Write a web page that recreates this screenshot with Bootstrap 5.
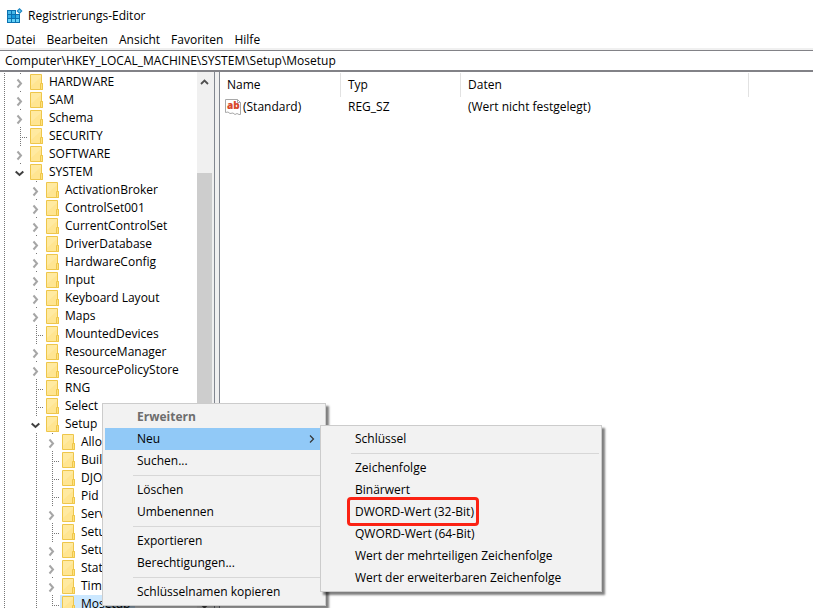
<!DOCTYPE html>
<html lang="de">
<head>
<meta charset="utf-8">
<meta name="viewport" content="width=device-width, initial-scale=1">
<title>Registrierungs-Editor</title>
<link href="https://cdn.jsdelivr.net/npm/bootstrap@5.3.0/dist/css/bootstrap.min.css" rel="stylesheet">
<style>
  body { font: 12px/18px "Open Sans", "Noto Sans", sans-serif; color: #000; background: #fff; }
  button { font: inherit; color: inherit; background: none; border: 0; padding: 0; text-align: left; }
  .title-bar { height: 30px; padding: 1px 7px 0; gap: 5px; }
  .menu-bar { height: 20px; padding: 0 6px; gap: 11px; border-bottom: 2px solid #f0f0f0; }
  .menu-bar button { line-height: 19px; }
  .address { height: 22px; padding: 0 5px; border: 0; border-top: 1px solid #828287; border-bottom: 2px solid #828287; border-radius: 0; font: inherit; color: #000; outline: 0; }
  .tree-pane { flex: 0 0 214px; }
  .tree { padding-top: 1px; }
  .tree li { display: flex; align-items: center; height: 18px; white-space: nowrap; }
  .tree a { color: #000; text-decoration: none; padding: 0 3px; }
  .folder { width: 14px; height: 16px; flex: none; margin-right: 2px; }
  .gap, .line, .stub, .twist { flex: none; width: 16px; height: 18px; }
  .edge { width: 15px; }
  .stub, .twist { width: 15px; }
  .line, .stub { background: repeating-linear-gradient(#777 0 1px, transparent 1px 2px) 5px 0 / 1px 100% no-repeat; }
  .edge { background-position-x: 4px; }
  .stub { background: repeating-linear-gradient(#777 0 1px, transparent 1px 2px) 5px 0 / 1px 100% no-repeat,
          repeating-linear-gradient(90deg, #777 0 1px, transparent 1px 2px) 7px 10px / 6px 1px no-repeat; }
  .stub.last { background-size: 1px 11px, 6px 1px; }
  .twist { background: linear-gradient(#777, #777) 5px 0 / 1px 1px no-repeat; }
  .twist svg { display: block; width: 10px; height: 18px; }
  .picked { background: #cce8ff; height: 18px; display: flex; align-items: center; padding-right: 2px; margin-left: -2px; padding-left: 2px; }
  .track { width: 17px; background: #f0f0f0; padding: 0 2px 0 0; }
  .arrow { height: 18px; width: 17px; line-height: 0; }
  .thumb { width: 15px; margin-top: 83px; background: #cdcdcd; }
  .splitter { flex: 0 0 6px; background: #f0f0f0; border-left: 1px solid #828790; border-right: 1px solid #828790; }
  .values { table-layout: fixed; }
  .values th { font-weight: 400; height: 25px; padding: 1px 7px 0; background: linear-gradient(#e2e2e2, #e2e2e2) 100% 1px / 1px 100% no-repeat; }
  .values th:last-child { background: none; }
  .values td { height: 20px; padding: 0 7px; white-space: nowrap; }
  .values td:first-child { padding: 0 5px; }
  .values .c-name { width: 121px; }
  .values .c-type { width: 120px; }
  .values .c-data { width: 288px; }
  .popup { position: absolute; z-index: 5; background: #f2f2f2; border: 1px solid #ccc; padding: 2px; box-shadow: 3px 3px 2px rgba(0,0,0,.5); }
  .popup ul { margin: 0; padding: 0; list-style: none; }
  .popup button { display: flex; align-items: center; width: 100%; height: 22px; padding: 0 8px 0 32px; white-space: nowrap; }
  .popup .active-item { background: #91c9f7; }
  .popup .rule { height: 1px; margin: 3px 0 3px 28px; background: #d7d7d7; }
  .ctx { left: 102px; top: 403px; width: 224px; }
  .sub { left: 215px; top: -3px; width: 282px; }
  .heading { font-weight: 700; color: #6d6d6d; }
  .ring { position: absolute; inset: -4px auto -3px 24px; width: 132px; border: 3px solid #fb2213; border-radius: 4px; pointer-events: none; }
</style>
</head>
<body class="vh-100 d-flex flex-column overflow-hidden position-relative">
<svg class="d-none">
  <symbol id="folder" viewBox="0 0 14 16"><path d="M.5.5h11v9h1v6H.5z" fill="#ffe591" stroke="#eec64a"/><path d="M1 1h10v2L1 12z" fill="#ffecab" opacity=".6"/><path d="M10.500 9.500h2v6h-2z" fill="#ffe27f" stroke="#eec64a"/></symbol>
  <symbol id="closed" viewBox="0 0 10 18"><path d="M2.500 6.500 6 10.500 2.500 14.500" fill="none" stroke="#a6a6a6" stroke-width="2"/></symbol>
  <symbol id="open" viewBox="0 0 10 18"><path d="M.700 8.500 4.500 12l3.800-3.500" fill="none" stroke="#404040" stroke-width="2"/></symbol>
</svg>

<header class="title-bar d-flex align-items-center flex-shrink-0">
  <svg width="16" height="16" viewBox="0 0 16 16" class="flex-shrink-0">
    <path d="M0 2h9v4h4v9H0z" fill="#0b71b0"/>
    <path d="M1 3h3v3H1zM5 3h3v3H5z" fill="#49b9e8"/>
    <path d="M1 7h3v3H1zM5 7h3v3H5zM9 7h3v3H9z" fill="#3aaee4"/>
    <path d="M5 7h3v3H5z" fill="#1599dc"/>
    <path d="M1 11h3v3H1zM5 11h3v3H5zM9 11h3v3H9z" fill="#63d0f6"/>
    <path d="m12.500 0 3 3-3 3-3-3z" fill="#1582c0"/><path d="m12.500 1.500 1.500 1.500-1.500 1.500L11 3z" fill="#6cc8ee"/>
  </svg>
  <span>Registrierungs-Editor</span>
</header>

<nav class="menu-bar d-flex align-items-start flex-shrink-0" aria-label="Menü">
  <button type="button">Datei</button>
  <button type="button">Bearbeiten</button>
  <button type="button">Ansicht</button>
  <button type="button">Favoriten</button>
  <button type="button">Hilfe</button>
</nav>

<input class="address w-100 flex-shrink-0" type="text" aria-label="Adresse" spellcheck="false" value="Computer\HKEY_LOCAL_MACHINE\SYSTEM\Setup\Mosetup">

<main class="d-flex flex-grow-1 overflow-hidden">
  <section class="tree-pane d-flex overflow-hidden" aria-label="Schlüssel">
    <ul class="tree list-unstyled mb-0 flex-grow-1 overflow-hidden">
      <li><i class="line edge"></i><button class="twist" aria-label="Öffnen"><svg><use href="#closed"/></svg></button><svg class="folder"><use href="#folder"/></svg><a href="#">HARDWARE</a></li>
      <li><i class="line edge"></i><button class="twist" aria-label="Öffnen"><svg><use href="#closed"/></svg></button><svg class="folder"><use href="#folder"/></svg><a href="#">SAM</a></li>
      <li><i class="line edge"></i><button class="twist" aria-label="Öffnen"><svg><use href="#closed"/></svg></button><svg class="folder"><use href="#folder"/></svg><a href="#">Schema</a></li>
      <li><i class="line edge"></i><i class="stub"></i><svg class="folder"><use href="#folder"/></svg><a href="#">SECURITY</a></li>
      <li><i class="line edge"></i><button class="twist" aria-label="Öffnen"><svg><use href="#closed"/></svg></button><svg class="folder"><use href="#folder"/></svg><a href="#">SOFTWARE</a></li>
      <li><i class="line edge"></i><button class="twist" aria-label="Schließen"><svg><use href="#open"/></svg></button><svg class="folder"><use href="#folder"/></svg><a href="#">SYSTEM</a></li>
      <li><i class="line edge"></i><i class="gap"></i><button class="twist" aria-label="Öffnen"><svg><use href="#closed"/></svg></button><svg class="folder"><use href="#folder"/></svg><a href="#">ActivationBroker</a></li>
      <li><i class="line edge"></i><i class="gap"></i><button class="twist" aria-label="Öffnen"><svg><use href="#closed"/></svg></button><svg class="folder"><use href="#folder"/></svg><a href="#">ControlSet001</a></li>
      <li><i class="line edge"></i><i class="gap"></i><button class="twist" aria-label="Öffnen"><svg><use href="#closed"/></svg></button><svg class="folder"><use href="#folder"/></svg><a href="#">CurrentControlSet</a></li>
      <li><i class="line edge"></i><i class="gap"></i><button class="twist" aria-label="Öffnen"><svg><use href="#closed"/></svg></button><svg class="folder"><use href="#folder"/></svg><a href="#">DriverDatabase</a></li>
      <li><i class="line edge"></i><i class="gap"></i><button class="twist" aria-label="Öffnen"><svg><use href="#closed"/></svg></button><svg class="folder"><use href="#folder"/></svg><a href="#">HardwareConfig</a></li>
      <li><i class="line edge"></i><i class="gap"></i><button class="twist" aria-label="Öffnen"><svg><use href="#closed"/></svg></button><svg class="folder"><use href="#folder"/></svg><a href="#">Input</a></li>
      <li><i class="line edge"></i><i class="gap"></i><button class="twist" aria-label="Öffnen"><svg><use href="#closed"/></svg></button><svg class="folder"><use href="#folder"/></svg><a href="#">Keyboard Layout</a></li>
      <li><i class="line edge"></i><i class="gap"></i><button class="twist" aria-label="Öffnen"><svg><use href="#closed"/></svg></button><svg class="folder"><use href="#folder"/></svg><a href="#">Maps</a></li>
      <li><i class="line edge"></i><i class="gap"></i><i class="stub"></i><svg class="folder"><use href="#folder"/></svg><a href="#">MountedDevices</a></li>
      <li><i class="line edge"></i><i class="gap"></i><button class="twist" aria-label="Öffnen"><svg><use href="#closed"/></svg></button><svg class="folder"><use href="#folder"/></svg><a href="#">ResourceManager</a></li>
      <li><i class="line edge"></i><i class="gap"></i><button class="twist" aria-label="Öffnen"><svg><use href="#closed"/></svg></button><svg class="folder"><use href="#folder"/></svg><a href="#">ResourcePolicyStore</a></li>
      <li><i class="line edge"></i><i class="gap"></i><i class="stub"></i><svg class="folder"><use href="#folder"/></svg><a href="#">RNG</a></li>
      <li><i class="line edge"></i><i class="gap"></i><i class="stub"></i><svg class="folder"><use href="#folder"/></svg><a href="#">Select</a></li>
      <li><i class="line edge"></i><i class="gap"></i><button class="twist" aria-label="Schließen"><svg><use href="#open"/></svg></button><svg class="folder"><use href="#folder"/></svg><a href="#">Setup</a></li>
      <li><i class="line edge"></i><i class="gap"></i><i class="line"></i><button class="twist" aria-label="Öffnen"><svg><use href="#closed"/></svg></button><svg class="folder"><use href="#folder"/></svg><a href="#">Allo</a></li>
      <li><i class="line edge"></i><i class="gap"></i><i class="line"></i><i class="stub"></i><svg class="folder"><use href="#folder"/></svg><a href="#">Buil</a></li>
      <li><i class="line edge"></i><i class="gap"></i><i class="line"></i><i class="stub"></i><svg class="folder"><use href="#folder"/></svg><a href="#">DJO</a></li>
      <li><i class="line edge"></i><i class="gap"></i><i class="line"></i><i class="stub"></i><svg class="folder"><use href="#folder"/></svg><a href="#">Pid</a></li>
      <li><i class="line edge"></i><i class="gap"></i><i class="line"></i><button class="twist" aria-label="Öffnen"><svg><use href="#closed"/></svg></button><svg class="folder"><use href="#folder"/></svg><a href="#">Serv</a></li>
      <li><i class="line edge"></i><i class="gap"></i><i class="line"></i><i class="stub"></i><svg class="folder"><use href="#folder"/></svg><a href="#">Setu</a></li>
      <li><i class="line edge"></i><i class="gap"></i><i class="line"></i><button class="twist" aria-label="Öffnen"><svg><use href="#closed"/></svg></button><svg class="folder"><use href="#folder"/></svg><a href="#">Setu</a></li>
      <li><i class="line edge"></i><i class="gap"></i><i class="line"></i><button class="twist" aria-label="Öffnen"><svg><use href="#closed"/></svg></button><svg class="folder"><use href="#folder"/></svg><a href="#">Stat</a></li>
      <li><i class="line edge"></i><i class="gap"></i><i class="line"></i><button class="twist" aria-label="Öffnen"><svg><use href="#closed"/></svg></button><svg class="folder"><use href="#folder"/></svg><a href="#">Tim</a></li>
      <li><i class="line edge"></i><i class="gap"></i><i class="line"></i><i class="stub last"></i><span class="picked"><svg class="folder"><use href="#folder"/></svg><a href="#">Mosetup</a></span></li>
    </ul>
    <div class="track d-flex flex-column flex-shrink-0">
      <button class="arrow" aria-label="Nach oben"><svg width="15" height="18" viewBox="0 0 15 18"><path d="m4 12 3.500-3.500L11 12" fill="none" stroke="#505050" stroke-width="1.800"/></svg></button>
      <div class="thumb flex-grow-1"></div>
      <button class="arrow" aria-label="Nach unten"><svg width="15" height="18" viewBox="0 0 15 18"><path d="m4 14 3.500 3.500L11 14" fill="none" stroke="#505050" stroke-width="1.800"/></svg></button>
    </div>
  </section>
  <div class="splitter"></div>
  <section class="flex-grow-1 overflow-hidden" aria-label="Werte">
    <table class="values w-100">
      <colgroup><col class="c-name"><col class="c-type"><col class="c-data"><col></colgroup>
      <thead><tr><th>Name</th><th>Typ</th><th>Daten</th><th></th></tr></thead>
      <tbody><tr>
        <td><div class="d-flex align-items-center">
          <svg width="18" height="16" viewBox="0 0 18 16" class="flex-shrink-0"><path d="M.5.500h12l3 3v12H14l-2-1-2 1-2-1.500-3 .500-2-1.500-2.500.500z" fill="#fff" stroke="#a8a8a8"/><path d="M12.500.500v3h3" fill="none" stroke="#a8a8a8"/><text x="2" y="10" font-family="Open Sans, sans-serif" font-weight="800" font-size="10" fill="#d8472b">ab</text></svg>
          <span>(Standard)</span></div></td>
        <td>REG_SZ</td><td>(Wert nicht festgelegt)</td><td></td>
      </tr></tbody>
    </table>
  </section>
</main>

<div class="popup ctx">
  <ul>
    <li><button type="button" class="heading">Erweitern</button></li>
    <li class="position-relative"><button type="button" class="active-item">Neu
      <svg class="ms-auto" width="6" height="10" viewBox="0 0 6 10"><path d="m1 1.500 3.500 3.500L1 8.500" fill="none" stroke="#333" stroke-width="1.200"/></svg></button>
      <div class="popup sub">
        <ul>
          <li><button type="button">Schlüssel</button></li>
          <li class="rule"></li>
          <li><button type="button">Zeichenfolge</button></li>
          <li><button type="button">Binärwert</button></li>
          <li class="position-relative"><button type="button">DWORD-Wert (32-Bit)</button><span class="ring"></span></li>
          <li><button type="button">QWORD-Wert (64-Bit)</button></li>
          <li><button type="button">Wert der mehrteiligen Zeichenfolge</button></li>
          <li><button type="button">Wert der erweiterbaren Zeichenfolge</button></li>
        </ul>
      </div>
    </li>
    <li><button type="button">Suchen...</button></li>
    <li class="rule"></li>
    <li><button type="button">Löschen</button></li>
    <li><button type="button">Umbenennen</button></li>
    <li class="rule"></li>
    <li><button type="button">Exportieren</button></li>
    <li><button type="button">Berechtigungen...</button></li>
    <li class="rule"></li>
    <li><button type="button">Schlüsselnamen kopieren</button></li>
  </ul>
</div>
<script src="https://cdn.jsdelivr.net/npm/bootstrap@5.3.0/dist/js/bootstrap.bundle.min.js"></script>
</body>
</html>
